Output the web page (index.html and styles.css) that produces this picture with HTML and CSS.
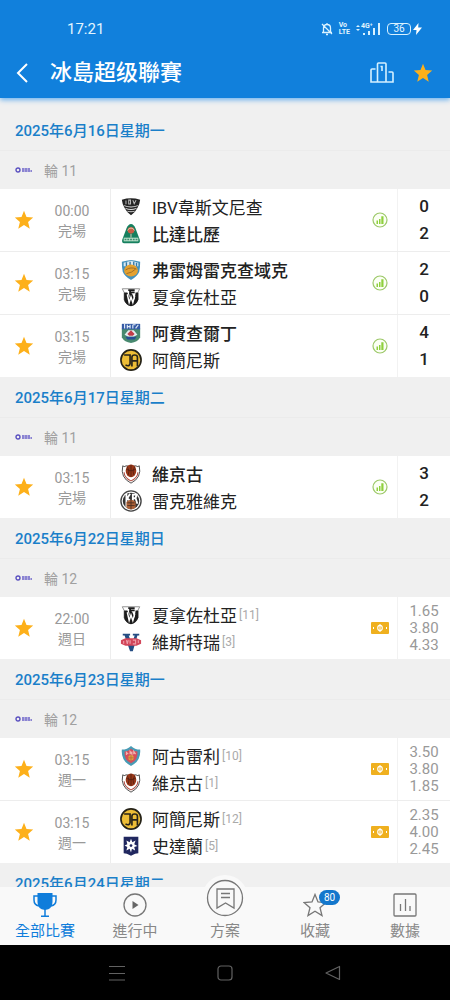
FILE: index.html
```html
<!DOCTYPE html>
<html lang="zh-Hant">
<head>
    <meta charset="UTF-8">
    <meta name="viewport" content="width=device-width, initial-scale=1.0">
    <title>冰島超级聯賽</title>
    <link rel="stylesheet" href="styles.css">
</head>
<body>
    <!-- Shared icons and club badges -->
    <svg class="sprite" aria-hidden="true">
        <symbol id="star" viewBox="0 0 24 24">
            <path fill="#fdb01a" d="M12 .8l3 7.700 8 .6-6.100 5.300 2 8.200-6.900-4.500-6.900 4.500 2-8.200L1 9.100l8-.6z"/>
        </symbol>
        <symbol id="stats" viewBox="0 0 16 16">
            <circle cx="8" cy="8" r="7" fill="#fbfff4" stroke="#9cc868" stroke-width="1.2"/>
            <path fill="#8ed03c" d="M4.500 8.500h1.500V12H4.500zM7 7h1.500v5H7zM9.300 4.300h2.200V12H9.300z"/>
        </symbol>
        <symbol id="cash" viewBox="0 0 18 12">
            <rect width="18" height="12" rx="1" fill="#efb01f"/>
            <ellipse cx="9" cy="6" rx="2.300" ry="2.600" fill="none" stroke="#fff" stroke-width="1.1"/>
            <path stroke="#fff" d="M9 2v8M2.500 5v2M15.500 5v2"/>
        </symbol>
        <symbol id="league" viewBox="0 0 18 6">
            <circle cx="3" cy="3" r="2" fill="none" stroke="#5a50c0" stroke-width="1.4"/>
            <path fill="none" stroke="#6a60c8" stroke-width="1.3" d="M7 2h8M7 4h10" stroke-dasharray="2.4 .4"/>
        </symbol>
        <symbol id="ibv" viewBox="0 0 24 24">
            <path fill="#242424" d="M2 4q10-3 20 0-.5 5-3 9-2.500 5-7 8-4.500-3-7-8-2.500-4-3-9z"/>
            <path fill="none" stroke="#ddd" stroke-width="1.1" d="M4.500 10.500q7.500 3 15 0M6 13.500q6 2.500 12 0M8 16.500q4 1.500 8 0"/>
            <path fill="none" stroke="#bbb" stroke-width="1.1" d="M6.500 5v4M9.500 4.500v4.200h2V4.500zM14 4.500l1.500 4 2-4"/>
        </symbol>
        <symbol id="breidablik" viewBox="0 0 24 24">
            <path fill="#16805f" d="M12 1q3 0 5 5l4.500 12q1 4-2 4h-15q-3 0-2-4L7 6q2-5 5-5z"/>
            <circle cx="12" cy="8" r="3.600" fill="#c85e45"/>
            <path fill="none" stroke="#e6cfb8" d="M8 8q4-5 8 0M12 12v4"/>
            <path fill="#b9dfc9" d="M4 16h16v4H4z"/>
            <path stroke="#3b8c70" stroke-dasharray="2 1" stroke-width="1.5" d="M5 18h14"/>
        </symbol>
        <symbol id="fram" viewBox="0 0 24 24">
            <path fill="#4391bd" d="M2 3l5-1 5-1 5 1 5 1q0 7-1 11-2 5-9 9-7-4-9-9-1-4-1-11z"/>
            <path fill="#d9eaf3" d="M4 4l8-2 8 2v4H4z"/>
            <path stroke="#3579a8" stroke-width="1.5" d="M7 3.500V8M11 3v5M15 3v5M18 4v4"/>
            <ellipse cx="12" cy="12.500" rx="7.500" ry="6.500" fill="#e4a02f"/>
            <path fill="none" stroke="#9b6b25" d="M6 12q6-4 12-1M7 16q6-1 10-5"/>
        </symbol>
        <symbol id="hafnarfjordur" viewBox="0 0 24 24">
            <path fill="#fff" stroke="#888" d="M2.500 3h19l-2 4v8q-2 5-7.500 6.500Q6 20 4.500 15V7z"/>
            <path fill="#1b1b1b" d="M4.500 7h3.500l3 7-1-6h3l3 7 1-8h3v8q-2 6-8 7-6-1-7.500-7z"/>
            <path stroke="#1b1b1b" stroke-width="2" d="M9 4.500h7M11 4v5M12 7h4"/>
            <path fill="none" stroke="#fff" stroke-width="1.6" d="M8 9l2 9 2-6 2 6 2-7"/>
        </symbol>
        <symbol id="afturelding" viewBox="0 0 24 24">
            <path fill="#48896f" d="M2 7h20v10q-3 5-10 6-7-1-10-6z"/>
            <path fill="#345aa5" d="M2 2h20v6H2z"/>
            <path stroke="#dce7f5" stroke-width="1.3" d="M5 2v5M8 3v4M8 5h3M11 3v4M14 3v4M14 3h3M17 7l3-4"/>
            <path fill="#e6edf1" d="M5 14l4-5h6l4 5-4 2H9z"/>
            <path fill="#c33c49" d="M8 13l4-4 4 4-2 2h-4z"/>
            <path fill="#264f94" d="M6 16h12l-2 3H8z"/>
        </symbol>
        <symbol id="akranes" viewBox="0 0 24 24">
            <circle cx="12" cy="12" r="11" fill="#edbd36" stroke="#252217" stroke-width="1.8"/>
            <path fill="none" stroke="#28241a" stroke-width="1.8" d="M4.500 6.500H11V16q-.5 3.500-5 1.500M13 19V9q0-2.500 3-2.500T19 9v10M13 13h6"/>
        </symbol>
        <symbol id="vikingur" viewBox="0 0 24 24">
            <path fill="#fff" stroke="#444" d="M3 3q1 2 4 0l5 1 5-1q3 2 4 0 3 13-9 19Q0 16 3 3z"/>
            <path fill="none" stroke="#b45348" stroke-width="1.2" d="M4.500 10q0 6 7.500 9.500 7.500-3.500 7.500-9.500"/>
            <ellipse cx="12" cy="8.500" rx="5.800" ry="7" fill="#983718"/>
            <path fill="none" stroke="#4a1d12" stroke-width=".8" d="M12 2v13M7 7q5 3 10 0M8 4q3 5 1 9M16 4q-3 5-1 9"/>
        </symbol>
        <symbol id="reykjavik" viewBox="0 0 24 24">
            <circle cx="12" cy="12" r="11" fill="#fff" stroke="#444" stroke-width="1.5"/>
            <circle cx="12" cy="12" r="9" fill="#333"/>
            <path fill="none" stroke="#fff" stroke-width="2" d="M7 4v15M11 4l-3 5 3 3M14 4v10M14 5h4l-1 4h-3M17 9l2 6"/>
            <path fill="#ad6239" d="M7 13q5-5 10 0v6q-5 4-10 0z"/>
            <path fill="none" stroke="#4d3022" d="M8 14h8M8 17h8M12 11v10"/>
        </symbol>
        <symbol id="vestri" viewBox="0 0 24 24">
            <path fill="#254d83" d="M3 3h8v2H9.500L13 14l3-9h-2V3h7v2h-2l-5 17h-3L5 5H3z"/>
            <path fill="#d2465a" d="M1 10l5-2h12l5 2v4l-5 2H6l-5-2z"/>
            <path fill="none" stroke="#ee9fa9" stroke-width="1.2" d="M4 11v3M7 10l1 4 1-4M11 10v4M14 10h3v4h-3M20 10v3"/>
        </symbol>
        <symbol id="akureyri" viewBox="0 0 24 24">
            <path fill="#489bb5" d="M12 1q4 4 10 4 1 12-10 18Q1 17 2 5q6 0 10-4z"/>
            <path fill="#d64f5c" d="M12 4q3 3 7 3 1 9-7 13Q4 16 5 7q4 0 7-3z"/>
            <path fill="none" stroke="#f2b4ae" stroke-width="1.2" d="M7 11V8l2 2M11 10V7l2 3V7M15 10V7l2 3"/>
            <circle cx="12" cy="14" r="3" fill="#e3a03f"/>
            <path stroke="#b06a3a" stroke-width=".8" d="M9 14h6M12 11v6"/>
        </symbol>
        <symbol id="stjarnan" viewBox="0 0 24 24">
            <path fill="#20275f" d="M4 2h16v18q-3 0-8 2.500Q7 20 4 20z"/>
            <path fill="#fff" d="M12 4l1.500 4 3.500-2-1.500 4 3.500 2-3.500 1 1 4-3.500-2-1 4-1.500-4-3.500 2 1-4-3-1.500 3-1.500L7 6l3.500 2z"/>
            <circle cx="12" cy="11.500" r="1.500" fill="#20275f"/>
        </symbol>
    </svg>

    <header class="app-header">
        <div class="status-bar">
            <span class="clock">17:21</span>
            <div class="status-icons">
                <svg width="12" height="14" viewBox="0 0 12 14" fill="none" stroke="#d9f2ff" stroke-width="1.3">
                    <path d="M2.500 10V6q0-3.500 3.500-3.500T9.500 6v4M1 10.500h10M5 12.500h2M6 1v1M1 2l10 10"/>
                </svg>
                <span class="volte">Vo<br>LTE</span>
                <span class="signal">
                    <svg width="25" height="14" viewBox="0 0 25 14" fill="#d9f2ff">
                        <path d="M0 5l2-2 2 2zM0 7l2 2 2-2zM7 11h2v2H7zM12 9h2v4h-2zM17 6h2v7h-2zM22 1h2v12h-2z"/>
                    </svg>
                    <span class="signal-type">4G⁺</span>
                </span>
                <span class="battery">36</span>
                <svg class="bolt" width="9" height="14" viewBox="0 0 9 14" fill="#fff">
                    <path d="M5.500 1L0 8h3.500L3 13l6-7.500H5.200z"/>
                </svg>
            </div>
        </div>
        <div class="title-bar">
            <button class="icon-btn back" aria-label="返回">
                <svg width="12" height="20" viewBox="0 0 12 20" fill="none" stroke="#fff" stroke-width="2">
                    <path d="M11 1L2 10l9 9"/>
                </svg>
            </button>
            <h1>冰島超级聯賽</h1>
            <button class="icon-btn" aria-label="積分榜">
                <svg width="24" height="22" viewBox="0 0 24 22" fill="none" stroke="#d5f0ff" stroke-width="1.6">
                    <path d="M5.500 7H2q-1 0-1 1v12h22V11q0-1-1-1h-3.500M7.500 20V2q0-1 1-1H15q1 0 1 1v18M10.500 4.500H12V9"/>
                </svg>
            </button>
            <button class="icon-btn favourite" aria-label="收藏聯賽">
                <svg width="20" height="20"><use href="#star"/></svg>
            </button>
        </div>
    </header>

    <main class="match-list">
        <section>
            <h2>2025年6月16日星期一</h2>
            <div class="round"><svg width="18" height="6"><use href="#league"/></svg>輪 11</div>
            <article class="match">
                <button class="icon-btn" aria-label="收藏"><svg width="20" height="20"><use href="#star"/></svg></button>
                <div class="time"><span>00:00</span><span>完場</span></div>
                <div class="teams">
                    <div class="team"><svg><use href="#ibv"/></svg>IBV韋斯文尼查</div>
                    <div class="team winner"><svg><use href="#breidablik"/></svg>比達比歷</div>
                </div>
                <svg class="info" width="16" height="16"><use href="#stats"/></svg>
                <div class="score"><span>0</span><span>2</span></div>
            </article>
            <article class="match">
                <button class="icon-btn" aria-label="收藏"><svg width="20" height="20"><use href="#star"/></svg></button>
                <div class="time"><span>03:15</span><span>完場</span></div>
                <div class="teams">
                    <div class="team winner"><svg><use href="#fram"/></svg>弗雷姆雷克查域克</div>
                    <div class="team"><svg><use href="#hafnarfjordur"/></svg>夏拿佐杜亞</div>
                </div>
                <svg class="info" width="16" height="16"><use href="#stats"/></svg>
                <div class="score"><span>2</span><span>0</span></div>
            </article>
            <article class="match">
                <button class="icon-btn" aria-label="收藏"><svg width="20" height="20"><use href="#star"/></svg></button>
                <div class="time"><span>03:15</span><span>完場</span></div>
                <div class="teams">
                    <div class="team winner"><svg><use href="#afturelding"/></svg>阿費查爾丁</div>
                    <div class="team"><svg><use href="#akranes"/></svg>阿簡尼斯</div>
                </div>
                <svg class="info" width="16" height="16"><use href="#stats"/></svg>
                <div class="score"><span>4</span><span>1</span></div>
            </article>
        </section>

        <section>
            <h2>2025年6月17日星期二</h2>
            <div class="round"><svg width="18" height="6"><use href="#league"/></svg>輪 11</div>
            <article class="match">
                <button class="icon-btn" aria-label="收藏"><svg width="20" height="20"><use href="#star"/></svg></button>
                <div class="time"><span>03:15</span><span>完場</span></div>
                <div class="teams">
                    <div class="team winner"><svg><use href="#vikingur"/></svg>維京古</div>
                    <div class="team"><svg><use href="#reykjavik"/></svg>雷克雅維克</div>
                </div>
                <svg class="info" width="16" height="16"><use href="#stats"/></svg>
                <div class="score"><span>3</span><span>2</span></div>
            </article>
        </section>

        <section>
            <h2>2025年6月22日星期日</h2>
            <div class="round"><svg width="18" height="6"><use href="#league"/></svg>輪 12</div>
            <article class="match">
                <button class="icon-btn" aria-label="收藏"><svg width="20" height="20"><use href="#star"/></svg></button>
                <div class="time"><span>22:00</span><span>週日</span></div>
                <div class="teams">
                    <div class="team"><svg><use href="#hafnarfjordur"/></svg>夏拿佐杜亞<small>[11]</small></div>
                    <div class="team"><svg><use href="#vestri"/></svg>維斯特瑞<small>[3]</small></div>
                </div>
                <svg class="info" width="18" height="12"><use href="#cash"/></svg>
                <div class="odds"><span>1.65</span><span>3.80</span><span>4.33</span></div>
            </article>
        </section>

        <section>
            <h2>2025年6月23日星期一</h2>
            <div class="round"><svg width="18" height="6"><use href="#league"/></svg>輪 12</div>
            <article class="match">
                <button class="icon-btn" aria-label="收藏"><svg width="20" height="20"><use href="#star"/></svg></button>
                <div class="time"><span>03:15</span><span>週一</span></div>
                <div class="teams">
                    <div class="team"><svg><use href="#akureyri"/></svg>阿古雷利<small>[10]</small></div>
                    <div class="team"><svg><use href="#vikingur"/></svg>維京古<small>[1]</small></div>
                </div>
                <svg class="info" width="18" height="12"><use href="#cash"/></svg>
                <div class="odds"><span>3.50</span><span>3.80</span><span>1.85</span></div>
            </article>
            <article class="match">
                <button class="icon-btn" aria-label="收藏"><svg width="20" height="20"><use href="#star"/></svg></button>
                <div class="time"><span>03:15</span><span>週一</span></div>
                <div class="teams">
                    <div class="team"><svg><use href="#akranes"/></svg>阿簡尼斯<small>[12]</small></div>
                    <div class="team"><svg><use href="#stjarnan"/></svg>史達蘭<small>[5]</small></div>
                </div>
                <svg class="info" width="18" height="12"><use href="#cash"/></svg>
                <div class="odds"><span>2.35</span><span>4.00</span><span>2.45</span></div>
            </article>
        </section>

        <section>
            <h2>2025年6月24日星期二</h2>
        </section>
    </main>

    <nav class="tab-bar">
        <a href="#" class="tab active">
            <svg width="24" height="24" viewBox="0 0 24 24" fill="none" stroke="#0f7ddb" stroke-width="1.5">
                <path fill="#0f7ddb" stroke="none" d="M4.500 0h15v9q0 7-7.500 8-7.500-1-7.500-8z"/>
                <path d="M5 3H1v4q0 5 5 6M19 3h4v4q0 5-5 6M12 16v7M8 23.200h8"/>
            </svg>
            全部比賽
        </a>
        <a href="#" class="tab">
            <svg width="24" height="24" viewBox="0 0 24 24" fill="none" stroke="#777" stroke-width="1.3">
                <circle cx="12" cy="12" r="11"/>
                <path fill="#666" stroke="none" d="M9.500 8l6 4-6 4z"/>
            </svg>
            進行中
        </a>
        <a href="#" class="tab plan">
            <svg width="46" height="46" viewBox="0 0 46 46" fill="none" stroke="#777" stroke-width="1.3">
                <circle cx="23" cy="23" r="23" fill="#f9f9f9" stroke="none"/>
                <circle cx="23" cy="23" r="17.500"/>
                <path d="M15 14h17v19l-8.500-5L15 33zM19 18.500h9M19 22.500h9"/>
            </svg>
            方案
        </a>
        <a href="#" class="tab">
            <svg width="24" height="24" viewBox="0 0 24 24" fill="none" stroke="#777" stroke-width="1.3">
                <path d="M12 1.500l3 7.500 8 .5-6 5.200 2 7.800-7-4.300-7 4.300 2-7.800L1 9.500 9 9z"/>
            </svg>
            <span class="badge">80</span>
            收藏
        </a>
        <a href="#" class="tab">
            <svg width="24" height="24" viewBox="0 0 24 24" fill="none" stroke="#777" stroke-width="1.3">
                <rect x="1" y="1" width="22" height="22" rx="1"/>
                <path d="M7.500 11v7M12.500 6v12M17 13v5"/>
            </svg>
            數據
        </a>
    </nav>

    <footer class="system-nav">
        <button class="icon-btn" aria-label="選單">
            <svg width="16" height="16" viewBox="0 0 16 16" stroke="#626262" stroke-width="1.2"><path d="M0 1.500h16M0 8.500h16M0 15h16"/></svg>
        </button>
        <button class="icon-btn" aria-label="主畫面">
            <svg width="16" height="16" viewBox="0 0 16 16" fill="none" stroke="#626262" stroke-width="1.2"><rect x="1" y="1" width="14" height="14" rx="3"/></svg>
        </button>
        <button class="icon-btn" aria-label="返回">
            <svg width="16" height="16" viewBox="0 0 16 16" fill="none" stroke="#626262" stroke-width="1.2"><path d="M14.500 1.500v13L1 8z" stroke-linejoin="round"/></svg>
        </button>
    </footer>
</body>
</html>
```
FILE: styles.css
```css
* {
    box-sizing: border-box;
}

body {
    display: flex;
    flex-direction: column;
    height: 100vh;
    margin: 0;
    font-family: Roboto, 'Noto Sans CJK TC', sans-serif;
    color: #222;
    background-color: #f0f0f0;
}

.sprite {
    position: absolute;
    width: 0;
    height: 0;
}

svg {
    display: block;
    flex: none;
}

.icon-btn {
    display: flex;
    align-items: center;
    justify-content: center;
    padding: 0;
    border: none;
    background: none;
    cursor: pointer;
}

/* Header */
.app-header {
    flex: none;
    padding-top: 18px;
    background-color: #1180dc;
    color: #fff;
    box-shadow: 0 2px 5px #6fb3ee;
    z-index: 1;
}

.status-bar {
    display: flex;
    align-items: center;
    justify-content: space-between;
    height: 22px;
    padding: 0 28px 0 67px;
    color: #e2f5ff;
}

.clock {
    font-size: 15px;
}

.status-icons {
    display: flex;
    align-items: center;
    gap: 6px;
}

.volte {
    font-size: 7px;
    line-height: 7px;
    font-weight: bold;
}

.signal {
    position: relative;
}

.signal-type {
    position: absolute;
    top: 0;
    left: 5px;
    font-size: 7px;
    line-height: 8px;
    font-weight: bold;
}

.battery {
    width: 24px;
    height: 12px;
    border: 1px solid #d9f2ff;
    border-radius: 4px;
    font-size: 10px;
    line-height: 10px;
    text-align: center;
}

.bolt {
    margin-left: -4px;
}

.title-bar {
    display: flex;
    align-items: center;
    height: 58px;
    padding: 8px 17px 0 16px;
}

.title-bar h1 {
    flex: 1;
    margin: 0 0 0 22px;
    font-size: 22px;
    line-height: 30px;
    font-weight: 500;
}

.favourite {
    margin-left: 19px;
}

/* Match list */
.match-list {
    flex: 1;
    min-height: 0;
    padding-top: 12px;
    overflow: hidden;
}

h2 {
    height: 41px;
    margin: 0;
    padding-left: 15px;
    border-bottom: 1px solid #ebebeb;
    font-size: 15px;
    line-height: 43px;
    font-weight: 500;
    color: #1a7fc9;
}

.round {
    display: flex;
    align-items: center;
    gap: 11px;
    height: 38px;
    padding-left: 15px;
    font-size: 14px;
    color: #a0a0a0;
}

.match {
    display: grid;
    grid-template-columns: 48px 62px 1fr 34px 53px;
    background-color: #fff;
}

.match + .match {
    border-top: 1px solid #ededed;
}

.time,
.score,
.odds {
    display: flex;
    flex-direction: column;
    justify-content: center;
    text-align: center;
}

.time {
    padding: 2px 14px 0 0;
    font-size: 14px;
    line-height: 20px;
    color: #999;
}

.teams {
    padding: 4px 0 4px 9px;
    border-left: 1px solid #ededed;
}

.team {
    display: flex;
    align-items: center;
    height: 27px;
    font-size: 17px;
    white-space: nowrap;
}

.team svg {
    width: 22px;
    height: 22px;
    margin-right: 10px;
}

.team small {
    margin-left: 2px;
    font-size: 12px;
    color: #aaa;
}

.winner {
    font-weight: 500;
}

.info {
    place-self: center;
}

.score {
    border-left: 1px solid #f2f2f2;
    font-size: 17px;
    line-height: 27px;
    font-weight: 500;
}

.odds {
    border-left: 1px solid #f2f2f2;
    font-size: 15px;
    line-height: 17px;
    color: #999;
}

/* Bottom tabs */
.tab-bar {
    display: flex;
    flex: none;
    height: 58px;
    background-color: #f9f9f9;
}

.tab {
    position: relative;
    display: flex;
    flex: 1;
    flex-direction: column;
    align-items: center;
    gap: 4px;
    padding-top: 6px;
    font-size: 15px;
    line-height: 20px;
    color: #888;
    text-decoration: none;
}

.tab.active {
    color: #0f7ddb;
}

.plan {
    padding-top: 34px;
}

.plan svg {
    position: absolute;
    top: -12px;
}

.badge {
    position: absolute;
    top: 3px;
    left: 50%;
    width: 21px;
    margin-left: 4px;
    border-radius: 8px;
    background-color: #1477cc;
    color: #fff;
    font-size: 10px;
    line-height: 15px;
    text-align: center;
}

/* Android navigation */
.system-nav {
    display: flex;
    flex: none;
    align-items: center;
    justify-content: center;
    gap: 92px;
    height: 55px;
    background-color: #000;
}
```
